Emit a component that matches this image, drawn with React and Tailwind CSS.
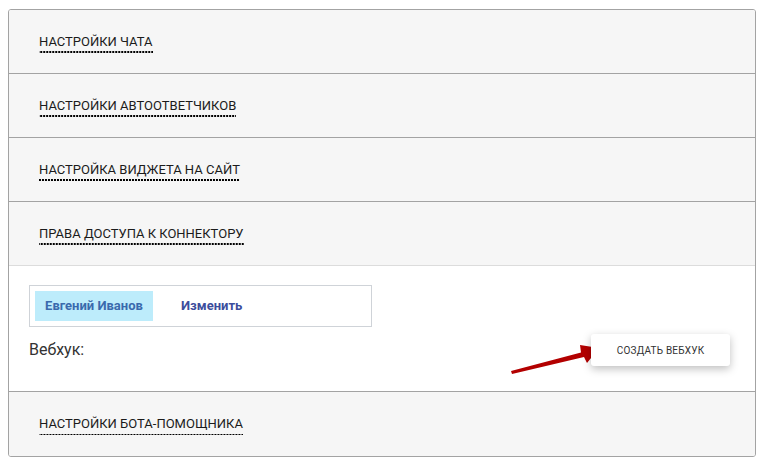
import React from "react";

function Header({ title, last, lightBorder }) {
  return (
    <div
      className={
        "h-[64px] flex items-center bg-[#f6f6f6] pl-[30px] " +
        (last ? "" : lightBorder ? "border-b border-[#dcdcdc]" : "border-b border-[#a3a3a3]")
      }
    >
      <span className="text-[13px] leading-[16px] text-[#1b1b1b] pb-[3px] mt-[3px] bg-[linear-gradient(to_right,#000_67%,transparent_0)] bg-[length:3px_1.5px] bg-repeat-x bg-bottom">
        {title}
      </span>
    </div>
  );
}

export default function App() {
  return (
    <div className="w-[764px] h-[462px] bg-white pt-[9px] pl-[8px]" style={{ fontFamily: "Roboto, 'Liberation Sans', sans-serif" }}>
      <div className="w-[748px] border border-[#a3a3a3] rounded-[3px] overflow-hidden">
        <Header title="НАСТРОЙКИ ЧАТА" />
        <Header title="НАСТРОЙКИ АВТООТВЕТЧИКОВ" />
        <Header title="НАСТРОЙКА ВИДЖЕТА НА САЙТ" />
        <Header title="ПРАВА ДОСТУПА К КОННЕКТОРУ" lightBorder />
        <div className="bg-white border-b border-[#a3a3a3] pt-[19px] pl-[20px] pr-[25px] pb-[25px] relative">
          <div className="w-[343px] h-[42px] border border-[#cfd3d8] p-[5px] flex items-center">
            <div className="h-[30px] w-[118px] bg-[#bdecfb] flex items-center justify-center text-[13px] font-bold text-[#3a6aad]">
              Евгений Иванов
            </div>
            <div className="ml-[28px] text-[13px] font-bold text-[#3c4d9c]">Изменить</div>
          </div>
          <div className="flex items-center justify-between mt-[7px]">
            <span className="text-[16px] text-[#333]">Вебхук:</span>
            <div className="relative">
              <svg className="absolute left-[-80px] top-[10px]" width="90" height="34" viewBox="0 0 90 34">
                <polygon points="0,27 70,8.5 69,1 88,4 76,19 73,13 1,30" fill="#b30000" />
              </svg>
              <button className="relative h-[32px] w-[139px] bg-white rounded-[3px] shadow-[0_3px_8px_rgba(0,0,0,0.25)] text-[10px] text-[#333] tracking-[0.2px]">
                СОЗДАТЬ ВЕБХУК
              </button>
            </div>
          </div>
        </div>
        <Header title="НАСТРОЙКИ БОТА-ПОМОЩНИКА" last />
      </div>
    </div>
  );
}
